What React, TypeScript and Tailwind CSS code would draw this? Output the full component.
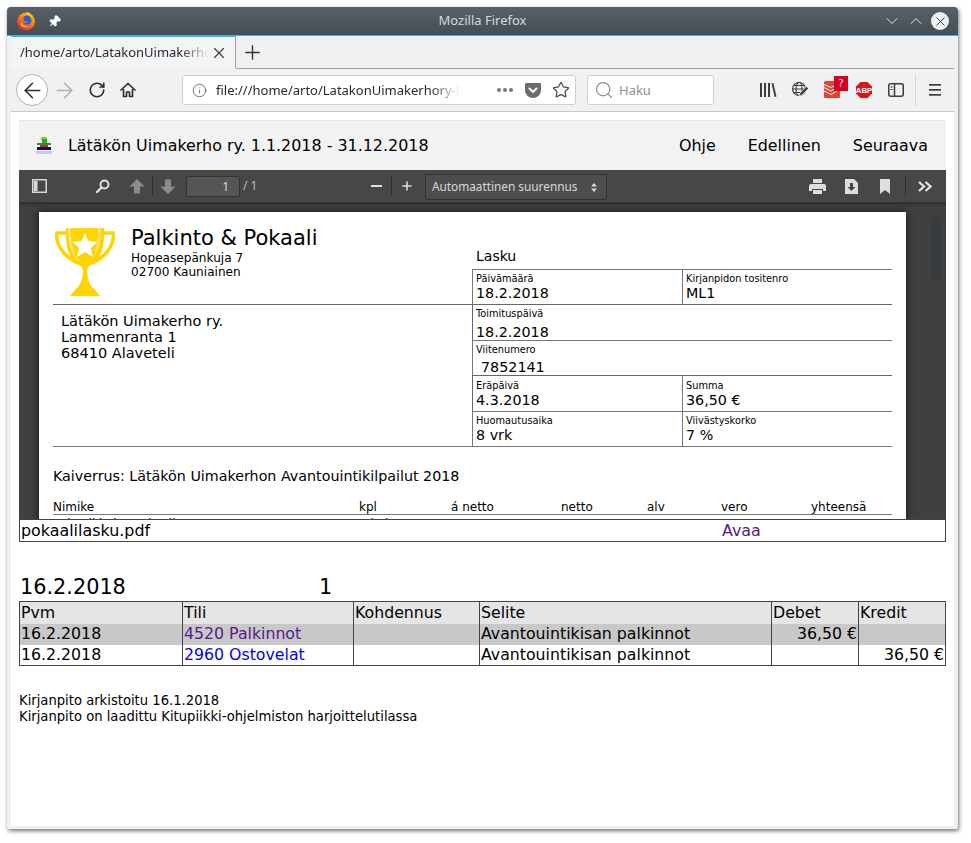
import React from 'react';
import { ArrowLeft, ArrowRight, RotateCw, Info, X, Plus, Star, Search, ChevronDown, ChevronUp, Pin } from 'lucide-react';

const rows = [
  { pvm: '16.2.2018', tili: '4520 Palkinnot', visited: true, selite: 'Avantouintikisan palkinnot', debet: '36,50 €', kredit: '', bg: 'bg-[#c8c8c8]' },
  { pvm: '16.2.2018', tili: '2960 Ostovelat', visited: false, selite: 'Avantouintikisan palkinnot', debet: '', kredit: '36,50 €', bg: 'bg-white' },
];

const FirefoxLogo = () => (
  <svg width="20" height="20" viewBox="0 0 20 20">
    <defs>
      <linearGradient id="ff" x1="0.8" y1="0" x2="0.2" y2="1">
        <stop offset="0" stopColor="#ffcb00" />
        <stop offset="0.45" stopColor="#ff7a18" />
        <stop offset="1" stopColor="#d6204e" />
      </linearGradient>
    </defs>
    <circle cx="10" cy="10.5" r="9" fill="url(#ff)" />
    <path d="M8 5.500C11 3.500 15 5 15.500 9c.3 3-2.500 5.200-5 4.600-1.600-.4-2.600-1.400-3-2.400 1.500.9 3.600.6 4.200-.5-1.200-.3-2.400 0-3.500-.7C7 9 7.200 6.500 8 5.500z" fill="#2f5fc8" />
    <path d="M11 1c2.500.8 5 3 5.800 6.500C15.500 5 13.500 3.500 11 3.500z" fill="#ffd21e" />
    <path d="M5.500 11c1 3.500 4.500 5 7.500 4-2.500 2-6.500 1.500-8.500-1z" fill="#ffb13b" />
  </svg>
);

const Pocket = () => (
  <svg width="18" height="18" viewBox="0 0 18 18">
    <path d="M2 2h14a1 1 0 0 1 1 1v6a8 8 0 0 1-16 0V3a1 1 0 0 1 1-1z" fill="#6b6b6e" />
    <path d="M5.500 7.500 9 11l3.500-3.500" fill="none" stroke="#fff" strokeWidth="2" strokeLinecap="round" strokeLinejoin="round" />
  </svg>
);

const LibraryIcon = () => (
  <svg width="18" height="16" viewBox="0 0 18 16" fill="#3d3d40">
    <rect x="1" y="1" width="2" height="14" />
    <rect x="5" y="1" width="2" height="14" />
    <rect x="9" y="1" width="2" height="14" />
    <path d="M12.500 1.500 14.300 1 17.500 14.500 15.700 15z" />
  </svg>
);

const GlobePen = () => (
  <svg width="18" height="18" viewBox="0 0 18 18" fill="none" stroke="#3d3d40" strokeWidth="1.100">
    <circle cx="8" cy="8" r="6.500" />
    <ellipse cx="8" cy="8" rx="3" ry="6.500" />
    <path d="M1.500 8h13M2.500 4.500h11M2.500 11.500h11" />
    <path d="M8 15 9 12 15.500 5.500 17.500 7.500 11 14z" fill="#3d3d40" stroke="#f0f1f3" strokeWidth="0.700" />
  </svg>
);

const TodoistIcon = () => (
  <div className="relative w-[32px] h-[32px]">
    <svg className="absolute left-[8px] top-[7px]" width="16" height="17" viewBox="0 0 16 17">
      <rect width="16" height="17" rx="1.500" fill="#e44332" />
      <path d="M0 6.500 7 10 13 6.500M0 10 7 13.500 13 10M0 3.500 7 6.500 13 3.500" fill="none" stroke="#fff" strokeWidth="1" />
    </svg>
    <span className="absolute left-[18px] top-[2px] w-[14px] h-[15px] bg-[#d70022] text-white text-[10px] leading-[15px] text-center font-['Noto_Sans',sans-serif]">?</span>
  </div>
);

const AbpIcon = () => (
  <svg width="18" height="18" viewBox="0 0 18 18">
    <polygon points="5.500,1 12.500,1 17,5.500 17,12.500 12.500,17 5.500,17 1,12.500 1,5.500" fill="#d7141a" />
    <text x="9" y="11.800" textAnchor="middle" fontSize="7.800" fontWeight="700" fill="#fff" fontFamily="Liberation Sans, sans-serif">ABP</text>
  </svg>
);

const SidebarIcon = () => (
  <svg width="16" height="14" viewBox="0 0 16 14" fill="none" stroke="#3d3d40" strokeWidth="1.500">
    <rect x="0.750" y="0.750" width="14.500" height="12.500" rx="2" />
    <path d="M6.500 1v12" />
    <path d="M2.500 4h2.200M2.500 6.500h2.200" strokeWidth="1.200" />
  </svg>
);

const Hamburger = () => (
  <svg width="14" height="12" viewBox="0 0 14 12" fill="#3d3d40">
    <rect x="1" y="0" width="12" height="1.700" />
    <rect x="1" y="5" width="12" height="1.700" />
    <rect x="1" y="10" width="12" height="1.700" />
  </svg>
);

const HomeIcon = () => (
  <svg width="16" height="16" viewBox="0 0 16 16" fill="none" stroke="#2f2f31" strokeWidth="1.700" strokeLinejoin="round">
    <path d="M1 8 8 1.500 15 8" strokeLinecap="round" />
    <path d="M3.500 7v7.500h3V10h3v4.500h3V7" />
  </svg>
);

const PdfIcons = {
  sidebar: (
    <svg width="15" height="14" viewBox="0 0 15 14" fill="none" stroke="#d8d8d8" strokeWidth="1.500">
      <rect x="0.750" y="0.750" width="13.500" height="12.500" />
      <rect x="2" y="2" width="3.500" height="10" fill="#d8d8d8" stroke="none" />
    </svg>
  ),
  search: (
    <svg width="14" height="14" viewBox="0 0 14 14" fill="none" stroke="#e0e0e0" strokeWidth="2">
      <circle cx="8.500" cy="5.500" r="4" />
      <path d="M5.500 8.500 1 13" strokeLinecap="round" strokeWidth="2.400" />
    </svg>
  ),
  up: (
    <svg width="16" height="15" viewBox="0 0 16 15" fill="#8c8c8c">
      <path d="M8 0 15.500 7.500H11V14.500H5V7.500H.5z" />
    </svg>
  ),
  down: (
    <svg width="16" height="15" viewBox="0 0 16 15" fill="#8c8c8c">
      <path d="M8 15 .5 7.500H5V.5h6v7h4.500z" />
    </svg>
  ),
  print: (
    <svg width="17" height="15" viewBox="0 0 17 15" fill="#dedede">
      <path d="M4 0h9v4H4z" />
      <path d="M2 5h13a2 2 0 0 1 2 2v5h-3v-2H3v2H0V7a2 2 0 0 1 2-2z" />
      <path d="M4 11h9v4H4z" />
    </svg>
  ),
  download: (
    <svg width="13" height="15" viewBox="0 0 13 15">
      <path d="M0 0h9l4 4v11H0z" fill="#dedede" />
      <path d="M5 4h3v4h2.500l-4 4-4-4H5z" fill="#474747" />
    </svg>
  ),
  bookmark: (
    <svg width="10" height="15" viewBox="0 0 10 15" fill="#dedede">
      <path d="M0 0h10v15L5 11 0 15z" />
    </svg>
  ),
  more: (
    <svg width="14" height="11" viewBox="0 0 14 11" fill="none" stroke="#e6e6e6" strokeWidth="2.200">
      <path d="M1 1 6 5.500 1 10M7.500 1 12.500 5.500 7.500 10" />
    </svg>
  ),
};

const Trophy = () => (
  <svg width="62" height="68" viewBox="0 0 62 68">
    <path d="M13 5H3C1 16 10 29 24 35M49 5h10c2 11-7 24-21 30" fill="none" stroke="#ffd400" strokeWidth="3.500" />
    <path d="M12 0h38c1 20-3 33-16 39l-1 3c0 9 3 16 8 20l5 6H16l5-6c5-4 8-11 8-20l-1-3C15 33 11 20 12 0z" fill="#ffd400" />
    <path d="M14 0h3c0 16 3 27 9 34-8-5-12-17-12-34zM44 0h3c0 14-3 26-10 33 5-8 7-19 7-33z" fill="#ffe36b" />
    <polygon points="31,5 34.600,13.300 43.500,14.100 36.800,20 38.800,28.700 31,24.100 23.200,28.700 25.200,20 18.500,14.100 27.400,13.300" fill="#fff" />
  </svg>
);

const ClubLogo = () => (
  <svg width="18" height="18" viewBox="0 0 18 18">
    <rect x="6" y="0" width="6" height="3" fill="#9acd32" />
    <rect x="7" y="2" width="5" height="6" fill="#22b022" />
    <rect x="2" y="6" width="14" height="2" fill="#1f9d1f" />
    <rect x="5" y="8" width="8" height="2" fill="#e02020" />
    <rect x="2" y="10" width="14" height="3" fill="#10107a" />
    <rect x="1" y="14" width="16" height="3" fill="#c8c8f0" />
  </svg>
);

const Cell = ({ label, value, first, low }: { label: string; value: string; first?: boolean; low?: boolean }) => (
  <div className={`w-[209px] ${first ? '' : 'border-l border-[#777]'} pl-[3px] ${low ? 'pt-[3px]' : 'pt-[2px]'}`}>
    <div className="text-[9.8px] leading-[13px]">{label}</div>
    <div className="text-[14.3px] leading-[16px]">{value}</div>
  </div>
);

const InvoicePage = () => (
  <div className="ml-[20px] mt-[9px] w-[867px] bg-white px-[14px] text-black shadow-[0_0_8px_rgba(0,0,0,0.7)] font-['DejaVu_Sans',sans-serif]">
    <div className="grid grid-cols-[419px_420px] border-b border-[#777]">
      <div className="flex flex-col">
        <div className="h-[93px] border-b border-[#666] flex items-start pt-[16px] pl-[1px]">
          <Trophy />
          <div className="ml-[15px] -mt-[2px]">
            <div className="text-[21px] leading-[25px]">Palkinto &amp; Pokaali</div>
            <div className="text-[12.1px] leading-[14px]">Hopeasepänkuja 7</div>
            <div className="text-[12.1px] leading-[14px]">02700 Kauniainen</div>
          </div>
        </div>
        <div className="pl-[8px] pt-[8px] text-[14.5px] leading-[16px]">
          <div>Lätäkön Uimakerho ry.</div>
          <div>Lammenranta 1</div>
          <div>68410 Alaveteli</div>
        </div>
      </div>
      <div>
        <div className="h-[57px] pl-[4px] pt-[35px] text-[14px] leading-[18px]">Lasku</div>
        <div className="flex h-[35px] border-t border-l border-[#777]">
          <Cell first label="Päivämäärä" value="18.2.2018" />
          <Cell label="Kirjanpidon tositenro" value="ML1" />
        </div>
        <div className="flex h-[36px] border-t border-l border-[#666]">
          <div className="pl-[3px] pt-[2px]">
            <div className="text-[9.8px] leading-[13px]">Toimituspäivä</div>
            <div className="text-[14.3px] leading-[17px] mt-[4px]">18.2.2018</div>
          </div>
        </div>
        <div className="flex h-[35px] border-t border-l border-[#777]">
          <div className="pl-[3px] pt-[2px]">
            <div className="text-[9.8px] leading-[13px]">Viitenumero</div>
            <div className="text-[14.3px] leading-[17px] mt-[3px] pl-[5px]">7852141</div>
          </div>
        </div>
        <div className="flex h-[36px] border-t border-l border-[#666]">
          <Cell first low label="Eräpäivä" value="4.3.2018" />
          <Cell low label="Summa" value="36,50 €" />
        </div>
        <div className="flex h-[35px] border-t border-l border-[#777]">
          <Cell first label="Huomautusaika" value="8 vrk" />
          <Cell label="Viivästyskorko" value="7 %" />
        </div>
      </div>
    </div>
    <div className="pt-[20px] text-[14.28px] leading-[18px]">Kaiverrus: Lätäkön Uimakerhon Avantouintikilpailut 2018</div>
    <div className="mt-[14px] pt-px grid grid-cols-[306px_92px_110px_86px_74px_90px_81px] text-[12px] leading-[15px] border-b border-[#777] h-[16px]">
      <span>Nimike</span>
      <span>kpl</span>
      <span>á netto</span>
      <span>netto</span>
      <span>alv</span>
      <span>vero</span>
      <span>yhteensä</span>
    </div>
    <div className="grid grid-cols-[306px_92px_1fr] text-[12px] leading-[15px] pt-[2px] pb-[20px]">
      <span>Pokaali kaiverruksella</span>
      <span>1 kpl</span>
      <span />
    </div>
  </div>
);

export default function App() {
  return (
    <div className="w-[971px] h-[843px] bg-white overflow-hidden pl-[7px] pt-[7px]">
      <div className="w-[951px] h-[822px] bg-[#eff0f1] rounded-t-[4px] rounded-b-[2px] shadow-[1px_2px_4px_rgba(0,0,0,0.55)] flex flex-col overflow-hidden">
        {/* title bar */}
        <div className="h-[28px] shrink-0 bg-gradient-to-b from-[#586068] to-[#454d55] flex items-center font-['Noto_Sans',sans-serif]">
          <div className="flex-1 flex items-center pl-[9px]">
            <FirefoxLogo />
            <Pin size={13} className="ml-[12px] rotate-45 text-white fill-white" />
          </div>
          <span className="text-[13px] text-[#d6d9db]">Mozilla Firefox</span>
          <div className="flex-1 flex items-center justify-end pr-[9px]">
            <ChevronDown size={20} strokeWidth={1.200} className="text-[#e4e6e8]" />
            <ChevronUp size={20} strokeWidth={1.200} className="ml-[4px] text-[#e4e6e8]" />
            <div className="ml-[5px] w-[18px] h-[18px] rounded-full bg-[#eff0f1] flex items-center justify-center">
              <X size={15} strokeWidth={1.500} className="text-[#31363b]" />
            </div>
          </div>
        </div>
        <div className="h-px shrink-0 bg-[#3daee9]" />

        {/* browser area */}
        <div className="mx-[4px] flex-1 flex flex-col min-h-0 mb-[3px]">
          <div className="h-[33px] shrink-0 flex font-['Noto_Sans',sans-serif]">
            <div className="w-[225px] h-[33px] -mt-px bg-[#f3f4f6] border-t-2 border-[#3daee9] border-r border-r-[#a0a0a0] flex items-center pl-[9px]">
              <span className="w-[189px] overflow-hidden whitespace-nowrap text-[13px] text-[#2a2a2e] [mask-image:linear-gradient(to_right,black_85%,transparent)]">/home/arto/LatakonUimakerhory-kirjanpito</span>
              <X size={18} strokeWidth={1.500} className="ml-[1px] text-[#3a3a3e]" />
            </div>
            <div className="flex-1 border-b border-[#a0a0a0] pl-[5px] pt-[5px]">
              <Plus size={23} strokeWidth={1.400} className="text-[#333]" />
            </div>
          </div>

          <div className="h-[43px] shrink-0 bg-[#f0f1f3] border-b border-[#c8c8ca] flex items-center pl-[5px] font-['Noto_Sans',sans-serif]">
            <div className="w-[32px] h-[32px] rounded-full bg-white border border-[#b1b1b3] flex items-center justify-center">
              <ArrowLeft size={25} strokeWidth={1.500} className="text-[#2f2f31]" />
            </div>
            <div className="w-[33px] flex justify-center"><ArrowRight size={25} strokeWidth={1.500} className="text-[#b1b1b3]" /></div>
            <div className="w-[31px] flex justify-center"><RotateCw size={18} strokeWidth={2.200} className="text-[#2f2f31]" /></div>
            <div className="w-[32px] flex justify-center"><HomeIcon /></div>

            <div className="ml-[38px] w-[394px] h-[30px] rounded-[3px] bg-white border border-[#cfcfd1] flex items-center">
              <Info size={15} strokeWidth={1.300} className="ml-[9px] text-[#5a5a5c]" />
              <span className="ml-[9px] mt-[2px] w-[244px] overflow-hidden whitespace-nowrap text-[13px] text-[#2a2a2e] [mask-image:linear-gradient(to_right,black_88%,transparent)]">file:///home/arto/LatakonUimakerhory-kirjanpito</span>
              <span className="ml-[37px] flex gap-[2px]">
                <i className="w-[4px] h-[4px] rounded-full bg-[#77777a]" />
                <i className="w-[4px] h-[4px] rounded-full bg-[#77777a]" />
                <i className="w-[4px] h-[4px] rounded-full bg-[#77777a]" />
              </span>
              <span className="ml-[11px]"><Pocket /></span>
              <Star size={18} strokeWidth={1.700} className="ml-[10px] text-[#4a4a4e]" />
            </div>

            <div className="ml-[11px] w-[127px] h-[30px] rounded-[3px] bg-white border border-[#cfcfd1] flex items-center">
              <Search size={20} strokeWidth={1.500} className="ml-[6px] text-[#8f8f92]" />
              <span className="ml-[5px] mt-[2px] text-[13px] text-[#8f8f92]">Haku</span>
            </div>

            <div className="ml-[38px] w-[32px] flex justify-center"><LibraryIcon /></div>
            <div className="w-[32px] flex justify-center"><GlobePen /></div>
            <TodoistIcon />
            <div className="w-[32px] flex justify-center"><AbpIcon /></div>
            <div className="w-[32px] flex justify-center"><SidebarIcon /></div>
            <div className="ml-[3px] w-px h-[32px] bg-[#d6d6d8]" />
            <div className="ml-[3px] w-[32px] flex justify-center"><Hamburger /></div>
          </div>

          {/* page */}
          <div className="flex-1 bg-white pl-[8px] pt-[8px] overflow-hidden">
            <div className="w-[927px] h-[50px] bg-[#f2f2f2] border-t border-[#e6e6e6] flex items-center font-['DejaVu_Sans',sans-serif] text-[15.91px] text-black">
              <div className="ml-[16px] w-[33px]"><ClubLogo /></div>
              <span>Lätäkön Uimakerho ry. 1.1.2018 - 31.12.2018</span>
              <div className="ml-auto flex mr-[18px]">
                <span>Ohje</span>
                <span className="ml-[32px]">Edellinen</span>
                <span className="ml-[32px]">Seuraava</span>
              </div>
            </div>

            {/* pdf viewer */}
            <div className="w-[927px] h-[349px] bg-[#404040] overflow-hidden flex flex-col">
              <div className="h-[33px] shrink-0 bg-[#474747] border-b border-[#333] flex items-center font-['Noto_Sans',sans-serif] text-[#d9d9d9] shadow-[0_1px_3px_rgba(0,0,0,0.4)] relative z-10">
                <div className="w-[40px] flex justify-center">{PdfIcons.sidebar}</div>
                <div className="ml-[28px] w-[32px] flex justify-center">{PdfIcons.search}</div>
                <div className="ml-[3px] w-[30px] flex justify-center">{PdfIcons.up}</div>
                <div className="w-px h-[20px] bg-[#2e2e2e]" />
                <div className="w-[30px] flex justify-center">{PdfIcons.down}</div>
                <div className="ml-[3px] w-[54px] h-[21px] rounded-[2px] bg-[#555] border border-[#333] text-right pr-[10px] text-[12px] leading-[19px]">1</div>
                <span className="ml-[3px] w-[14px] text-[12px] text-[#bdbdbd] whitespace-nowrap">/ 1</span>
                <div className="ml-[104px] w-[30px] flex justify-center"><span className="w-[11px] h-[2px] bg-[#e0e0e0]" /></div>
                <div className="w-px h-[20px] bg-[#2e2e2e]" />
                <div className="w-[30px] flex justify-center"><Plus size={14} strokeWidth={2.600} className="text-[#e0e0e0]" /></div>
                <div className="ml-[3px] mt-[2px] w-[182px] h-[26px] rounded-[2px] bg-[#4d4d4d] border border-[#333] flex items-center pl-[6px] text-[11.8px]">
                  <span>Automaattinen suurennus</span>
                  <svg className="ml-auto mr-[9px]" width="6" height="9" viewBox="0 0 6 9" fill="#d9d9d9"><path d="M3 0 6 3.500H0zM3 9 0 5.500h6z" /></svg>
                </div>
                <div className="ml-auto w-[34px] flex justify-center">{PdfIcons.print}</div>
                <div className="w-[34px] flex justify-center">{PdfIcons.download}</div>
                <div className="w-[34px] flex justify-center">{PdfIcons.bookmark}</div>
                <div className="ml-[3px] w-px h-[20px] bg-[#2e2e2e]" />
                <div className="w-[38px] mr-[2px] flex justify-center">{PdfIcons.more}</div>
              </div>
              <div className="relative flex-1 min-h-0 overflow-hidden">
                <InvoicePage />
                <div className="absolute right-[5px] top-[14px] w-[10px] h-[64px] rounded-[3px] bg-[#383b3d]" />
              </div>
            </div>

            {/* attachment row */}
            <div className="w-[927px] h-[23px] border border-[#444] flex items-center font-['DejaVu_Sans',sans-serif] text-[15.9px] bg-white">
              <span className="ml-px w-[701px] text-black">pokaalilasku.pdf</span>
              <span className="text-[#551a8b]">Avaa</span>
            </div>

            {/* voucher */}
            <div className="mt-[32px] flex h-[27px] font-['DejaVu_Sans',sans-serif] text-[20.8px] leading-[26px] text-black">
              <span className="ml-px w-[299px]">16.2.2018</span>
              <span>1</span>
            </div>
            <table className="w-[926px] table-fixed border-collapse font-['DejaVu_Sans',sans-serif] text-[15.75px] leading-[20px] text-black">
              <colgroup>
                <col className="w-[163px]" />
                <col className="w-[171px]" />
                <col className="w-[126px]" />
                <col className="w-[292px]" />
                <col className="w-[87px]" />
                <col className="w-[87px]" />
              </colgroup>
              <thead>
                <tr className="bg-[#e5e5e5] h-[22px]">
                  {['Pvm', 'Tili', 'Kohdennus', 'Selite', 'Debet', 'Kredit'].map((h) => (
                    <th key={h} className="border border-[#444] border-b-0 px-px py-0 font-normal text-left">{h}</th>
                  ))}
                </tr>
              </thead>
              <tbody>
                {rows.map((r) => (
                  <tr key={r.tili} className={`${r.bg} h-[21px]`}>
                    <td className="border-x border-[#444] border-b-0 px-px py-0">{r.pvm}</td>
                    <td className={`border-x border-[#444] px-px py-0 ${r.visited ? 'text-[#551a8b]' : 'text-[#0000ee]'}`}>{r.tili}</td>
                    <td className="border-x border-[#444] px-px py-0" />
                    <td className="border-x border-[#444] px-px py-0">{r.selite}</td>
                    <td className="border-x border-[#444] px-px py-0 text-right">{r.debet}</td>
                    <td className="border-x border-[#444] px-px py-0 text-right">{r.kredit}</td>
                  </tr>
                ))}
                <tr className="h-0"><td colSpan={6} className="border-t border-[#444] p-0" /></tr>
              </tbody>
            </table>

            {/* footer */}
            <div className="mt-[27px] font-['DejaVu_Sans',sans-serif] text-[13.17px] leading-[16px] text-black">
              <div>Kirjanpito arkistoitu 16.1.2018</div>
              <div>Kirjanpito on laadittu Kitupiikki-ohjelmiston harjoittelutilassa</div>
            </div>
          </div>
        </div>
      </div>
    </div>
  );
}
